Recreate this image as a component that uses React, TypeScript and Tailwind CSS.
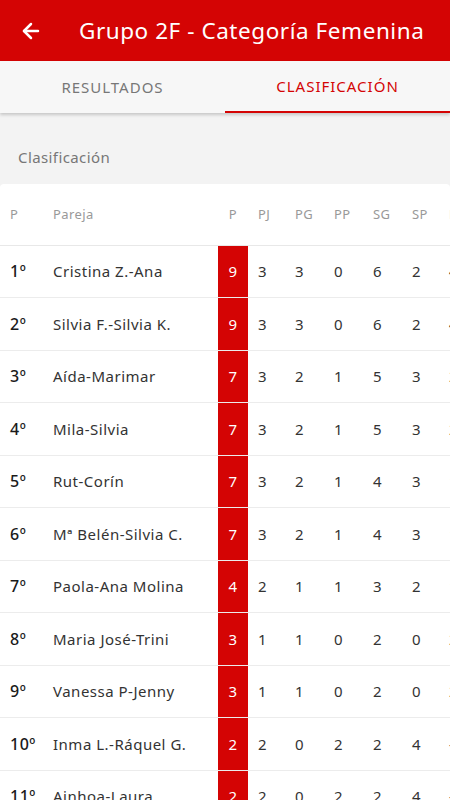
import React from 'react';
import { ArrowLeft } from 'lucide-react';

const rows = [
    { pos: '1º', name: 'Cristina Z.-Ana', p: 9, pj: 3, pg: 3, pp: 0, sg: 6, sp: 2 },
    { pos: '2º', name: 'Silvia F.-Silvia K.', p: 9, pj: 3, pg: 3, pp: 0, sg: 6, sp: 2 },
    { pos: '3º', name: 'Aída-Marimar', p: 7, pj: 3, pg: 2, pp: 1, sg: 5, sp: 3 },
    { pos: '4º', name: 'Mila-Silvia', p: 7, pj: 3, pg: 2, pp: 1, sg: 5, sp: 3 },
    { pos: '5º', name: 'Rut-Corín', p: 7, pj: 3, pg: 2, pp: 1, sg: 4, sp: 3 },
    { pos: '6º', name: 'Mª Belén-Silvia C.', p: 7, pj: 3, pg: 2, pp: 1, sg: 4, sp: 3 },
    { pos: '7º', name: 'Paola-Ana Molina', p: 4, pj: 2, pg: 1, pp: 1, sg: 3, sp: 2 },
    { pos: '8º', name: 'Maria José-Trini', p: 3, pj: 1, pg: 1, pp: 0, sg: 2, sp: 0 },
    { pos: '9º', name: 'Vanessa P-Jenny', p: 3, pj: 1, pg: 1, pp: 0, sg: 2, sp: 0 },
    { pos: '10º', name: 'Inma L.-Ráquel G.', p: 2, pj: 2, pg: 0, pp: 2, sg: 2, sp: 4 },
    { pos: '11º', name: 'Ainhoa-Laura', p: 2, pj: 2, pg: 0, pp: 2, sg: 2, sp: 4 },
];

export default function App() {
    return (
        <div className="w-[450px] h-[800px] overflow-hidden bg-[#f3f3f3] flex flex-col" style={{ fontFamily: '"Noto Sans", sans-serif' }}>
            {/* Toolbar */}
            <div className="h-[61px] bg-[#d40404] flex items-center shrink-0">
                <ArrowLeft className="w-6 h-6 text-white ml-[19px] shrink-0" strokeWidth={2.5} />
                <h1 className="ml-[36px] text-white text-[22.5px] tracking-[0.55px] whitespace-nowrap">Grupo 2F - Categoría Femenina</h1>
            </div>

            {/* Tabs */}
            <div className="h-[52px] bg-[#f7f7f7] flex shrink-0 shadow-[0_2px_3px_rgba(0,0,0,0.18)] relative z-10">
                <div className="flex-1 flex items-center justify-center text-[15px] tracking-[1px] text-[#777]">RESULTADOS</div>
                <div className="flex-1 flex items-center justify-center text-[15px] tracking-[1px] text-[#d40404] border-b-2 border-[#d40404]">CLASIFICACIÓN</div>
            </div>

            <div className="pl-[18px] pt-[33px] pb-[15px] text-[15px] tracking-[0.4px] text-[#777] shrink-0">Clasificación</div>

            {/* Table card */}
            <div className="bg-white rounded-t overflow-hidden shrink-0">
                <div className="h-[62px] pt-[2px] flex items-center text-[13px] tracking-[0.4px] text-[#999] border-b border-[#e8e8e8]">
                    <div className="w-[43px] shrink-0 pl-[10px]">P</div>
                    <div className="w-[175px] shrink-0 pl-[10px]">Pareja</div>
                    <div className="w-[30px] shrink-0 text-center">P</div>
                    <div className="w-[37px] shrink-0 pl-[10px]">PJ</div>
                    <div className="w-[39px] shrink-0 pl-[10px]">PG</div>
                    <div className="w-[39px] shrink-0 pl-[10px]">PP</div>
                    <div className="w-[39px] shrink-0 pl-[10px]">SG</div>
                    <div className="w-[37px] shrink-0 pl-[10px]">SP</div>
                    <div className="w-[40px] shrink-0 pl-[10px] whitespace-nowrap">DS</div>
                </div>
                {rows.map((r) => (
                    <div key={r.pos} className="h-[52.5px] flex items-stretch text-[15px] tracking-[0.5px] text-[#333] border-b border-[#ececec]">
                        <div className="w-[43px] shrink-0 pl-[10px] flex items-center text-[16px] text-[#1a1a1a] font-medium">{r.pos}</div>
                        <div className="w-[175px] shrink-0 pl-[10px] flex items-center whitespace-nowrap">{r.name}</div>
                        <div className="w-[30px] shrink-0 bg-[#d40404] text-white flex items-center justify-center">{r.p}</div>
                        <div className="w-[37px] shrink-0 pl-[10px] flex items-center">{r.pj}</div>
                        <div className="w-[39px] shrink-0 pl-[10px] flex items-center">{r.pg}</div>
                        <div className="w-[39px] shrink-0 pl-[10px] flex items-center">{r.pp}</div>
                        <div className="w-[39px] shrink-0 pl-[10px] flex items-center">{r.sg}</div>
                        <div className="w-[37px] shrink-0 pl-[10px] flex items-center">{r.sp}</div>
                        <div className="w-[40px] shrink-0 pl-[10px] flex items-center">{r.sg - r.sp}</div>
                    </div>
                ))}
            </div>
        </div>
    );
}
